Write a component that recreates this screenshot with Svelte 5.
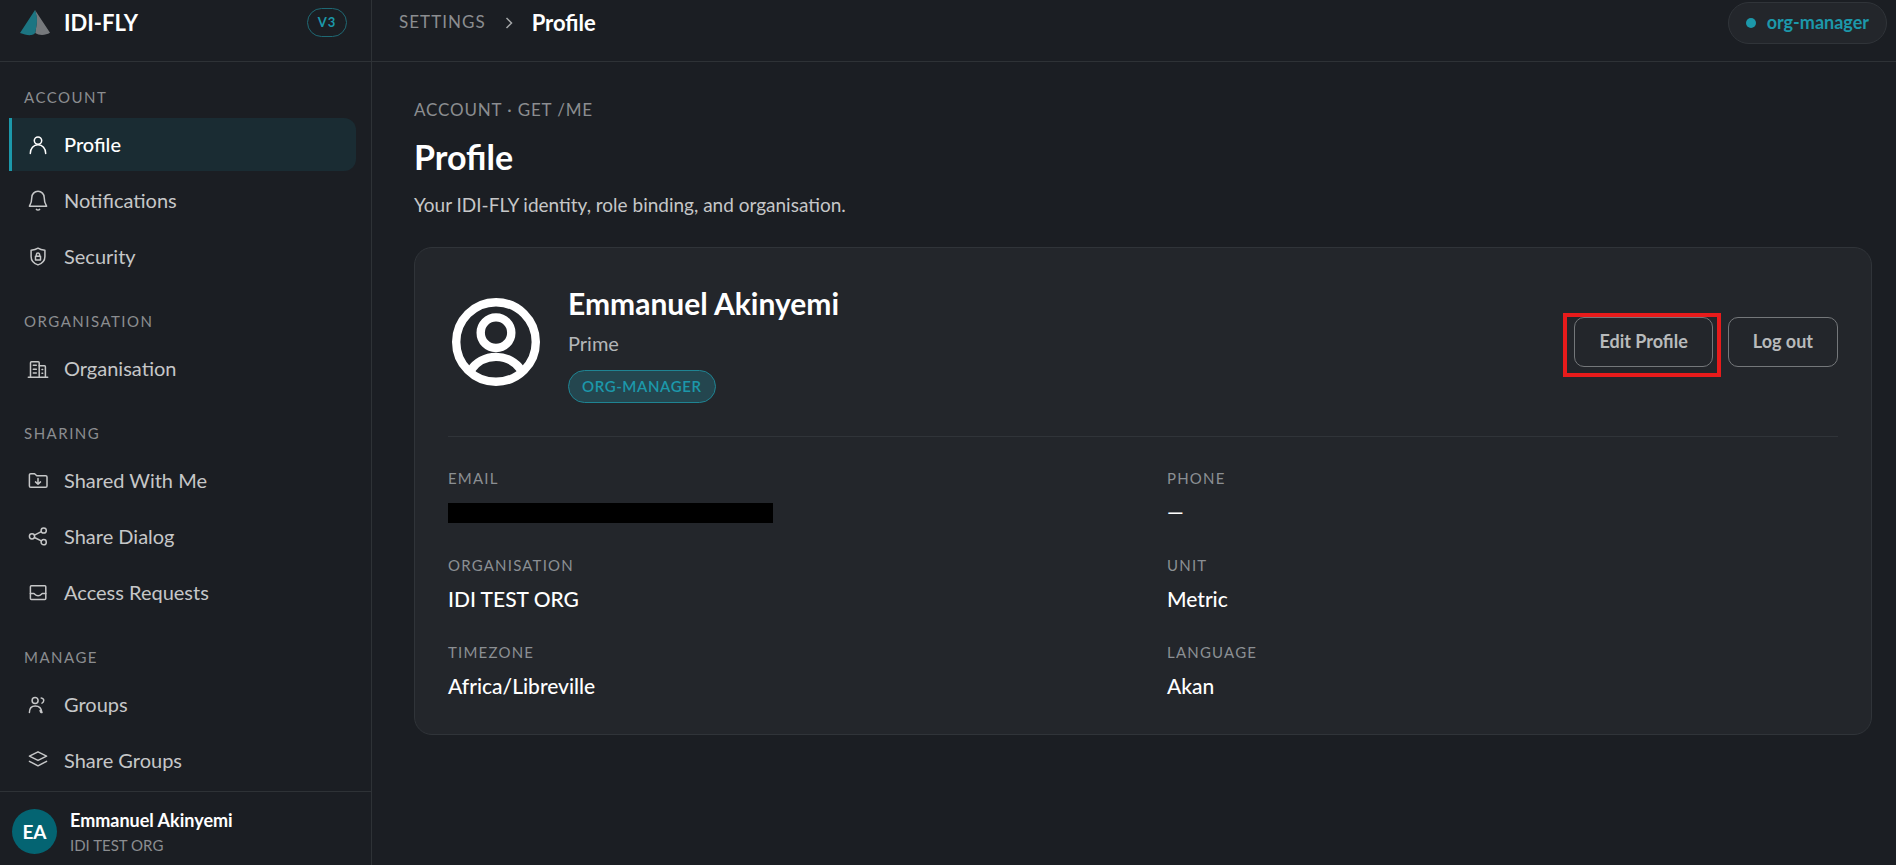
<script>
  const sections = [
    {
      title: 'Account',
      items: [
        { label: 'Profile', icon: 'user', active: true },
        { label: 'Notifications', icon: 'bell' },
        { label: 'Security', icon: 'shield' },
      ],
    },
    { title: 'Organisation', items: [{ label: 'Organisation', icon: 'building' }] },
    {
      title: 'Sharing',
      items: [
        { label: 'Shared With Me', icon: 'folder' },
        { label: 'Share Dialog', icon: 'share' },
        { label: 'Access Requests', icon: 'inbox' },
      ],
    },
    {
      title: 'Manage',
      items: [
        { label: 'Groups', icon: 'group' },
        { label: 'Share Groups', icon: 'layers' },
      ],
    },
  ];

  const icons = {
    user: ['M12 3.9a3.7 3.7 0 1 0 0 7.4 3.7 3.7 0 0 0 0-7.4z', 'M4.3 20.4c0-4.9 3.2-8.6 7.7-8.6s7.7 3.7 7.7 8.6'],
    bell: [
      'M12 2.3c-3.6 0-6.2 2.8-6.2 6.2 0 5.3-1.2 6.9-2.4 8.7h17.2c-1.2-1.8-2.4-3.4-2.4-8.7 0-3.4-2.6-6.2-6.2-6.2z',
      'M10.4 20.3c.5.9 2.7.9 3.2 0',
    ],
    shield: [
      'M12 3.2c2.2 1.5 4.5 1.9 6.9 2.1v6.2c0 4.4-2.8 7-6.9 8.4-4.1-1.4-6.9-4-6.9-8.4V5.3c2.4-.2 4.7-.6 6.9-2.1z',
      'M9.5 11.3h5v3.7h-5z',
      'M10.4 11.3V9.6a1.6 1.6 0 0 1 3.2 0v1.7',
    ],
    building: [
      'M2.3 20.3h19.4',
      'M4.5 20.3V5.7a1 1 0 0 1 1-1h6.7a1 1 0 0 1 1 1v14.6',
      'M13.2 8.7h5.2a1 1 0 0 1 1 1v10.6',
      'M7.3 8.3h3M7.3 12.2h3M7.3 16.1h3M16 12.5h.7M16 16.2h.7',
    ],
    folder: [
      'M3.4 17V6a1.3 1.3 0 0 1 1.3-1.3h3.9l2.2 2h8.9A1.3 1.3 0 0 1 21 8v9a1.3 1.3 0 0 1-1.3 1.3h-15A1.3 1.3 0 0 1 3.4 17z',
      'M12 9.5v5.7M9.5 12.9l2.5 2.4 2.5-2.4',
    ],
    share: [
      'M6 8.7a2.6 2.6 0 1 0 0 5.2 2.6 2.6 0 0 0 0-5.2z',
      'M17.7 2.9a2.6 2.6 0 1 0 0 5.2 2.6 2.6 0 0 0 0-5.2z',
      'M17.7 14.6a2.6 2.6 0 1 0 0 5.2 2.6 2.6 0 0 0 0-5.2z',
      'M8.4 10.1l6.9-3.4M8.4 12.5l6.9 3.4',
    ],
    inbox: [
      'M4.4 5.7a1 1 0 0 1 1-1h13.4a1 1 0 0 1 1 1v11.8a1 1 0 0 1-1 1H5.4a1 1 0 0 1-1-1z',
      'M4.4 12.5h3.4c1 0 1.3 2.2 4.3 2.2s3.3-2.2 4.3-2.2h3.4',
    ],
    group: [
      'M9.1 4.5a3 3 0 1 0 0 6 3 3 0 0 0 0-6z',
      'M3.4 19.6c0-4 2.3-6.6 5.9-6.6 3.500 0 6.200 2.600 6.700 6.600-1.200 0-1.700-.8-1.900-2.200',
      'M15.2 5.1c1.800.2 2.700 1.300 2.500 2.700-.1 1.100-.8 1.900-1.700 2.300',
    ],
    layers: ['M12 2.8l8.6 4.3-8.6 4.3-8.6-4.3z', 'M3.4 12.3l8.6 4.500 8.600-4.500'],
  };

  const fields = [
    { label: 'Email', value: '', hidden: true },
    { label: 'Phone', value: '—' },
    { label: 'Organisation', value: 'IDI TEST ORG' },
    { label: 'Unit', value: 'Metric' },
    { label: 'Timezone', value: 'Africa/Libreville' },
    { label: 'Language', value: 'Akan' },
  ];
</script>

<div class="app">
  <aside class="sidebar">
    <div class="brand">
      <svg class="logo" viewBox="0 0 30 26" aria-hidden="true">
        <path d="M15 0L30 22.8c-4.5 2.7-11 2.9-14.8.2C17 14 17.5 8 15 0z" fill="#76797c" />
        <path d="M15 0L0 23c4 1.2 7.5 2.6 11.5 2.1 2.5-.3 4-1.6 4.2-4C16.5 15 18.5 9 15 0z" fill="#1c7582" />
      </svg>
      <span class="brand-name">IDI-FLY</span>
      <span class="version">V3</span>
    </div>

    <nav class="nav">
      {#each sections as section}
        <section class="nav-section">
          <h2 class="nav-title">{section.title}</h2>
          {#each section.items as item}
            <a class="nav-item" class:active={item.active} href="#{item.icon}">
              <svg class="icon" viewBox="0 0 24 24" aria-hidden="true">
                {#each icons[item.icon] as d}
                  <path {d} />
                {/each}
              </svg>
              <span class="nav-label">{item.label}</span>
            </a>
          {/each}
        </section>
      {/each}
    </nav>

    <div class="account">
      <span class="initials">EA</span>
      <div>
        <div class="account-name">Emmanuel Akinyemi</div>
        <div class="account-org">IDI TEST ORG</div>
      </div>
    </div>
  </aside>

  <div class="page">
    <header class="topbar">
      <div class="crumbs">
        <a class="crumb" href="#settings">Settings</a>
        <svg class="chevron" viewBox="0 0 8 12" aria-hidden="true"><path d="M1.5 1l5 5-5 5" /></svg>
        <span class="crumb-current">Profile</span>
      </div>
      <span class="role"><span class="dot"></span><span class="role-name">org-manager</span></span>
    </header>

    <main class="content">
      <p class="eyebrow">Account · GET /me</p>
      <h1>Profile</h1>
      <p class="lead">Your IDI-FLY identity, role binding, and organisation.</p>

      <div class="card">
        <div class="identity">
          <svg class="avatar" viewBox="0 0 96 96" aria-hidden="true">
            <circle cx="48" cy="48" r="39.8" />
            <circle cx="48" cy="38.7" r="15.3" />
            <path d="M23 75.8A30.6 30.6 0 0 1 73 75.8" />
          </svg>
          <div class="who">
            <h2 class="name">Emmanuel Akinyemi</h2>
            <p class="plan">Prime</p>
            <span class="badge">org-manager</span>
          </div>
          <div class="actions">
            <div class="marked"><button type="button">Edit Profile</button></div>
            <button type="button">Log out</button>
          </div>
        </div>

        <dl class="fields">
          {#each fields as field}
            <div>
              <dt>{field.label}</dt>
              <dd>
                {#if field.hidden}<span class="redacted"></span>{:else}{field.value}{/if}
              </dd>
            </div>
          {/each}
        </dl>
      </div>
    </main>
  </div>
</div>

<style>
  :global(body) {
    background: #1b1e23;
  }

  .app {
    display: flex;
    height: 100vh;
    overflow: hidden;
    background: #1b1e23;
    color: #fff;
    font-family: Lato, sans-serif;
    font-size: 20px;
  }

  .app :is(h1, h2, p, dl, dd) {
    margin: 0;
  }

  .sidebar {
    display: flex;
    flex: none;
    flex-direction: column;
    box-sizing: border-box;
    width: 372px;
    border-right: 1px solid #2e3236;
  }

  .brand,
  .topbar {
    display: flex;
    flex: none;
    align-items: center;
    box-sizing: border-box;
    height: 62px;
    padding-bottom: 16px;
    border-bottom: 1px solid #2e3236;
  }

  .brand {
    padding-right: 24px;
    padding-left: 20px;
  }

  .logo {
    width: 30px;
    height: 26px;
    margin-right: 14px;
  }

  .brand-name {
    font-size: 22px;
    font-weight: 700;
  }

  .version {
    box-sizing: border-box;
    height: 29px;
    margin-left: auto;
    padding: 0 10px;
    border: 1px solid #1f6974;
    border-radius: 15px;
    color: #1c98aa;
    font-size: 13px;
    font-weight: 700;
    letter-spacing: 0.06em;
    line-height: 27px;
  }

  .nav {
    display: flex;
    flex: 1;
    flex-direction: column;
    gap: 28px;
    min-height: 0;
    overflow: hidden;
    padding: 25px 15px 0 9px;
  }

  .nav-section {
    display: flex;
    flex-direction: column;
    gap: 3px;
  }

  .nav .nav-title {
    margin: 0 15px 8px;
    color: #8b8d90;
    font-size: 15px;
    font-weight: 400;
    letter-spacing: 0.1em;
    line-height: 20px;
    text-transform: uppercase;
  }

  .nav-item {
    display: flex;
    align-items: center;
    gap: 14px;
    height: 53px;
    padding-left: 14px;
    border-left: 3px solid transparent;
    border-radius: 0 12px 12px 0;
    color: #c6c7c8;
    text-decoration: none;
  }

  .nav-item.active {
    border-left-color: #1c98aa;
    background: #1a2c33;
    color: #fff;
    font-weight: 500;
  }

  .nav-label,
  .crumb,
  .role-name {
    padding-bottom: 2px;
  }

  .icon {
    width: 24px;
    height: 24px;
    fill: none;
    stroke: currentColor;
    stroke-width: 1.5;
    stroke-linecap: round;
    stroke-linejoin: round;
  }

  .account {
    display: flex;
    flex: none;
    align-items: center;
    gap: 13px;
    height: 67px;
    padding: 6px 12px 0;
    border-top: 1px solid #2e3236;
  }

  .initials {
    width: 45px;
    height: 45px;
    border-radius: 50%;
    background: #046472;
    font-size: 19px;
    font-weight: 700;
    line-height: 45px;
    text-align: center;
  }

  .account-name {
    font-size: 18px;
    font-weight: 700;
    line-height: 26px;
  }

  .account-org {
    color: #8b8d90;
    font-size: 15px;
    line-height: 24px;
  }

  .page {
    flex: 1;
    min-width: 0;
  }

  .topbar {
    justify-content: space-between;
    padding-right: 9px;
    padding-left: 27px;
  }

  .crumbs {
    display: flex;
    align-items: center;
    gap: 19px;
  }

  .crumb {
    color: #8b8d90;
    font-size: 17px;
    letter-spacing: 0.06em;
    text-decoration: none;
    text-transform: uppercase;
  }

  .chevron {
    width: 8px;
    height: 12px;
    fill: none;
    stroke: #a5a7a9;
    stroke-width: 1.5;
  }

  .crumb-current {
    font-size: 22px;
    font-weight: 700;
  }

  .role {
    display: flex;
    align-items: center;
    gap: 11px;
    height: 40px;
    padding: 0 17px;
    border: 1px solid #303439;
    border-radius: 21px;
    background: #23262b;
    color: #1c98aa;
    font-size: 18px;
    font-weight: 700;
  }

  .dot {
    width: 10px;
    height: 10px;
    border-radius: 50%;
    background: #1c98aa;
  }

  .content {
    padding: 36px 24px 0 42px;
  }

  .eyebrow {
    color: #8b8d90;
    font-size: 17px;
    letter-spacing: 0.05em;
    line-height: 24px;
    text-transform: uppercase;
  }

  h1 {
    padding-top: 14px;
    font-size: 34px;
    font-weight: 700;
    line-height: 42px;
  }

  .lead {
    padding-top: 11px;
    color: #c6c7c8;
    font-size: 19px;
    line-height: 32px;
  }

  .card {
    margin-top: 26px;
    padding: 33px 33px 34px;
    border: 1px solid #303439;
    border-radius: 18px;
    background: #23262b;
  }

  .identity {
    display: flex;
    align-items: center;
    gap: 24px;
    padding-bottom: 33px;
    border-bottom: 1px solid #303439;
  }

  .avatar {
    flex: none;
    width: 96px;
    height: 96px;
    fill: none;
    stroke: #fff;
    stroke-width: 8.4;
  }

  .who {
    display: flex;
    flex: 1;
    flex-direction: column;
    align-items: flex-start;
  }

  .name {
    font-size: 30px;
    font-weight: 700;
    line-height: 44px;
  }

  .plan {
    padding: 4px 0 13px;
    color: #b4b6b8;
    line-height: 28px;
  }

  .badge {
    padding: 0 13px;
    border: 1px solid #1f8493;
    border-radius: 17px;
    background: #24464f;
    color: #1c98aa;
    font-size: 15px;
    font-weight: 600;
    letter-spacing: 0.04em;
    line-height: 31px;
    text-transform: uppercase;
  }

  .actions {
    display: flex;
    gap: 15px;
  }

  button {
    height: 50px;
    padding: 0 24px 2px;
    border: 1px solid #74777a;
    border-radius: 10px;
    background: transparent;
    color: #b8babb;
    font: inherit;
    font-size: 18px;
    font-weight: 700;
  }

  .marked {
    position: relative;
  }

  /* Highlight frame laid over the primary action */
  .marked::after {
    position: absolute;
    inset: -4px -8px -10px -11px;
    border: 4px solid #e81b1b;
    content: '';
    pointer-events: none;
  }

  .fields {
    display: grid;
    grid-template-columns: 1fr 1fr;
    gap: 29px 48px;
    padding-top: 31px;
  }

  dt {
    color: #8b8f93;
    font-size: 15px;
    letter-spacing: 0.08em;
    line-height: 20px;
    text-transform: uppercase;
  }

  .fields dd {
    height: 28px;
    padding-top: 10px;
    font-size: 21px;
    font-weight: 500;
    line-height: 28px;
  }

  .redacted {
    display: block;
    width: 325px;
    height: 20px;
    margin-top: 5px;
    background: #000;
  }
</style>
